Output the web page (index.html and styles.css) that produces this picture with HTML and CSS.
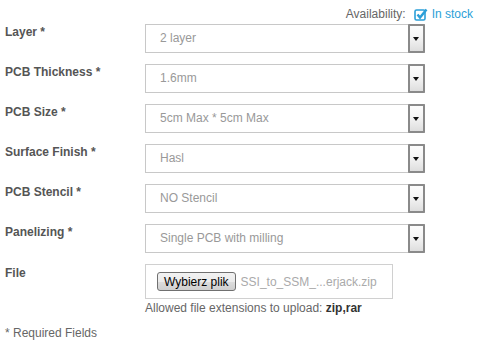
FILE: index.html
```html
<!DOCTYPE html>
<html lang="pl">
<head>
    <meta charset="UTF-8">
    <title>PCB Order</title>
    <link rel="stylesheet" href="styles.css">
</head>
<body>

    <!-- Stock info -->
    <div class="availability">
        <span>Availability:</span>
        <svg class="stock-icon" width="14" height="13" viewBox="0 0 14 13">
            <rect x="1" y="2" width="10" height="10" rx="1.5" fill="none" stroke="#2b9fd8" stroke-width="1.6"/>
            <path d="M3.5 6.5 L6 9.5 L12.5 1.5" fill="none" stroke="#2b9fd8" stroke-width="2.4"/>
        </svg>
        <span class="in-stock">In stock</span>
    </div>

    <!-- PCB options -->
    <form class="order-form">
        <div class="form-row">
            <label>Layer *</label>
            <div class="select"><span class="select-value">2 layer</span><span class="select-arrow"></span></div>
        </div>
        <div class="form-row">
            <label>PCB Thickness *</label>
            <div class="select"><span class="select-value">1.6mm</span><span class="select-arrow"></span></div>
        </div>
        <div class="form-row">
            <label>PCB Size *</label>
            <div class="select"><span class="select-value">5cm Max * 5cm Max</span><span class="select-arrow"></span></div>
        </div>
        <div class="form-row">
            <label>Surface Finish *</label>
            <div class="select"><span class="select-value">Hasl</span><span class="select-arrow"></span></div>
        </div>
        <div class="form-row">
            <label>PCB Stencil *</label>
            <div class="select"><span class="select-value">NO Stencil</span><span class="select-arrow"></span></div>
        </div>
        <div class="form-row">
            <label>Panelizing *</label>
            <div class="select"><span class="select-value">Single PCB with milling</span><span class="select-arrow"></span></div>
        </div>
        <div class="form-row file-row">
            <label>File</label>
            <div class="file-field">
                <div class="file-box">
                    <button type="button" class="file-button">Wybierz plik</button>
                    <span class="file-name">SSI_to_SSM_...erjack.zip</span>
                </div>
                <p class="file-note">Allowed file extensions to upload: <b>zip,rar</b></p>
            </div>
        </div>
    </form>

    <p class="required">* Required Fields</p>

</body>
</html>
```

FILE: styles.css
```css
/* Basic reset */
* {
    margin: 0;
    padding: 0;
    box-sizing: border-box;
}

body {
    font-family: 'Liberation Sans', Arial, sans-serif;
    font-size: 12px;
    color: #666;
    background: #fff;
    width: 484px;
}

/* Availability line in the top right corner */
.availability {
    height: 24px;
    display: flex;
    justify-content: flex-end;
    align-items: center;
    padding-right: 11px;
    padding-top: 4px;
    font-size: 12px;
    color: #666;
}

.stock-icon {
    margin: 0 4px 0 8px;
}

.in-stock {
    color: #2b9fd8;
}

/* Form rows */
.form-row {
    display: flex;
    margin-bottom: 11px;
}

.form-row label {
    width: 145px;
    padding-left: 5px;
    padding-top: 1px;
    font-weight: bold;
    font-size: 12px;
    color: #555;
}

/* Fake select boxes */
.select {
    width: 280px;
    height: 29px;
    display: flex;
    border: 1px solid #c8c8c8;
    border-right: none;
    background: #fff;
}

.select-value {
    flex: 1;
    padding-left: 14px;
    line-height: 27px;
    color: #999;
}

.select-arrow {
    position: relative;
    width: 17px;
    margin-top: -1px;
    margin-bottom: -1px;
    border: 2px solid #8a8a8a;
    border-radius: 1px;
    background: linear-gradient(#fcfcfc, #f4f4f4 45%, #dedede);
}

.select-arrow::after {
    content: "";
    position: absolute;
    left: 3px;
    top: 11px;
    border-left: 3.5px solid transparent;
    border-right: 3.5px solid transparent;
    border-top: 4px solid #111;
}

/* File upload */
.file-row label {
    padding-top: 2px;
}

.file-box {
    width: 248px;
    height: 35px;
    border: 1px solid #d0d0d0;
    display: flex;
    align-items: center;
    padding-left: 11px;
}

.file-button {
    font-family: 'Liberation Sans', Arial, sans-serif;
    font-size: 12px;
    color: #000;
    height: 19px;
    padding: 0 6px;
    border: 1px solid #707070;
    border-radius: 3px;
    background: linear-gradient(#f2f2f2, #ebebeb 50%, #dddddd 50%, #cfcfcf);
}

.file-name {
    margin-left: 5px;
    color: #aaa;
}

.file-note {
    margin-top: 2px;
    color: #666;
}

.file-note b {
    color: #333;
}

.required {
    padding-left: 5px;
    margin-top: 9px;
    color: #666;
}
```
